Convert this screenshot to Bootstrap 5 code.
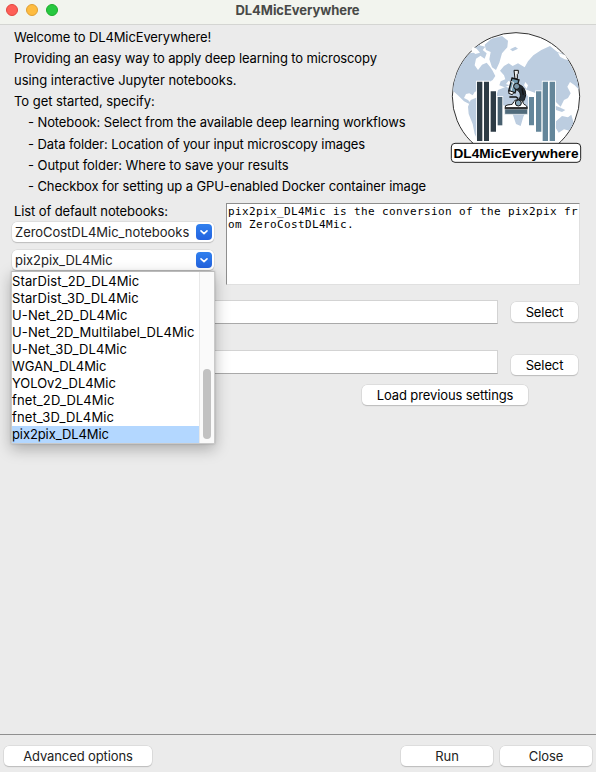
<!DOCTYPE html>
<html lang="en">
<head>
<meta charset="utf-8">
<meta name="viewport" content="width=device-width, initial-scale=1">
<title>DL4MicEverywhere</title>
<link href="https://cdn.jsdelivr.net/npm/bootstrap@5.3.0/dist/css/bootstrap.min.css" rel="stylesheet">
<style>
body{font-family:Inter,"Liberation Sans",sans-serif;font-size:13px;line-height:17px;color:#000;background:#ebebeb;height:772px;overflow:hidden}
.titlebar{height:25px;background:#f2f4ee;border-bottom:1px solid #d4d5d2;padding:0 6px 4px}
.titlebar .title{color:#484947;font-weight:700;letter-spacing:-.06px;line-height:18px;padding-right:53px}
.light{width:12px;height:12px;border-radius:50%;border:1px solid}
.light-r{background:#fe5f57;border-color:#e2483f}
.light-y{background:#febc3f;border-color:#dfa032}
.light-g{background:#27c840;border-color:#1dad2b}
.intro{height:178px;padding:2px 0 0 14px}
.intro p{line-height:21.33px;margin:0;white-space:pre}
.intro .item{padding-left:14px}
.logo{width:156px;height:146px;margin-top:-3px}
.pick{height:97px;padding-left:12px}
.pick-left{width:214px}
.lbl{padding-left:2px;height:19px}
.combo{height:20px;border-radius:5px;background:#fff;box-shadow:0 0 0 .5px #d2d2d2,0 1px 1px #aaa;padding:0 2px 0 3px;color:#222;width:202px}
.chev{width:16px;height:16px;border-radius:4px;background:linear-gradient(#3080ee,#2362df)}
.descr{width:354px;height:82px;background:#fff;border:1px solid #e0e0e0;border-top-color:#8e8e8e;border-left-color:#8e8e8e;font:11px/13px "DejaVu Sans Mono",monospace;letter-spacing:.378px;padding:1px 0 0 1px;white-space:pre}
.field{height:24px;width:486px;background:#fff;border:1px solid #d3d3d3;border-bottom-color:#a9a9a9;margin-right:13px}
.mac-btn{--bs-btn-padding-y:0;--bs-btn-padding-x:0;--bs-btn-font-size:13px;--bs-btn-line-height:19px;--bs-btn-border-radius:5px;--bs-btn-bg:#fff;--bs-btn-color:#000;--bs-btn-border-width:0;height:20px;box-shadow:0 0 0 .5px #d0d0d0,0 1px 1px #aaa}
.w-sel{width:67px;margin-top:2px}
.w-sel.lower{margin-top:5px}
.w-load{width:166px;margin:-15px 0 0 362px}
.w-adv{width:148px}
.w-run{width:92px}
.row-in{height:50px;padding-left:12px}
.footer-bar{height:38px;border-top:1px solid #8f8f8f;padding:11px 4px 0;gap:7px}
.footer-bar .mac-btn{--bs-btn-color:#222}
.popup{left:11px;top:271px;width:204px;height:173px;background:#fff;border:1px solid #c9c9c9;border-top-color:#bbb;box-shadow:0 5px 14px rgba(0,0,0,.28),0 0 2px rgba(0,0,0,.2)}
.popup .list-group{--bs-list-group-bg:#fff;--bs-list-group-color:#000;--bs-list-group-item-padding-x:0;--bs-list-group-item-padding-y:0;--bs-list-group-active-bg:#b3d7ff;--bs-list-group-active-color:#000;width:187px;padding-top:1px}
.popup .list-group-item{height:17px;white-space:nowrap}
.track{width:15px;background:#fafafa;border-left:1px solid #e8e8e8;padding:0 3px 4px}
.thumb{width:8px;height:70px;border-radius:4px;background:#c1c1c1}
.t0{letter-spacing:-.1px}
.t1{letter-spacing:-.04px}
.t2{letter-spacing:.12px}
.tn{letter-spacing:-.12px}
</style>
<script src="https://cdn.jsdelivr.net/npm/bootstrap@5.3.0/dist/js/bootstrap.bundle.min.js"></script>
</head>
<body class="d-flex flex-column position-relative">
<header class="titlebar d-flex align-items-center flex-shrink-0">
  <div class="d-flex gap-2"><span class="light light-r"></span><span class="light light-y"></span><span class="light light-g"></span></div>
  <div class="title flex-grow-1 text-center">DL4MicEverywhere</div>
</header>
<main class="flex-grow-1">
  <section class="intro d-flex justify-content-between">
    <div class="t0">
      <p class="tn">Welcome to DL4MicEverywhere!</p>
      <p class="tn">Providing an easy way to apply deep learning to microscopy</p>
      <p class="t1">using interactive Jupyter notebooks.</p>
      <p class="t1">To get started, specify:</p>
      <p class="item">- Notebook: Select from the available deep learning workflows</p>
      <p class="item">- Data folder: Location of your input microscopy images</p>
      <p class="item t1">- Output folder: Where to save your results</p>
      <p class="item">- Checkbox for setting up a GPU-enabled Docker container image</p>
    </div>
    <svg class="logo flex-shrink-0" viewBox="0 0 468 438">
      <defs><clipPath id="globe"><circle cx="228" cy="217" r="190"/></clipPath></defs>
      <circle cx="228" cy="217" r="191" fill="#fff" stroke="#333" stroke-width="3"/>
      <g clip-path="url(#globe)" fill="#bccde0">
        <path d="M30 160L62 112L90 88L112 84L126 92L108 104L104 124L114 138L126 122L140 116L150 128L158 140L166 156L158 168L148 174L136 184L122 188L112 200L104 204L98 214L88 208L78 210L72 222L84 228L92 236L88 240L72 232L52 212L34 196Z"/>
        <path d="M96 76L112 62L136 68L128 78L140 88L134 104L122 96L112 84Z"/>
        <path d="M134 62L154 44L186 36L204 50L202 70L186 88L178 116L168 138L156 130L148 106L152 84L138 78Z"/>
        <path d="M92 228L112 220L134 232L152 252L164 262L154 290L136 318L126 340L114 350L104 330L98 300L86 270L84 248Z"/>
        <path d="M180 140L192 126L206 118L218 126L234 118L254 130L264 112L280 94L304 78L330 66L352 84L378 92L390 120L410 160L420 200L404 184L390 174L382 188L392 208L384 222L372 228L362 248L350 236L338 226L330 214L318 214L304 218L294 210L284 206L272 202L256 196L240 192L224 190L208 184L194 190L178 184L182 172L196 166L192 154Z"/>
        <path d="M174 198L198 188L220 198L252 200L270 226L264 252L250 278L242 306L228 300L218 270L206 250L180 240L168 220Z"/>
        <path d="M294 210L314 212L308 232L298 224Z"/>
        <path d="M342 244L358 250L376 258L366 264L348 258Z"/>
        <path d="M348 292L366 276L384 280L394 272L402 300L388 320L372 316L356 326L346 310Z"/>
        <path d="M210 76L226 68L234 74L218 82Z"/>
      </g>
      <g fill="#fff">
        <path d="M98 68L110 74L120 86L106 90L94 80Z"/>
        <path d="M206 170L218 180L236 178L244 188L226 192L208 184L198 180Z"/>
        <path d="M256 174L264 184L260 194L252 184Z"/>
        <path d="M354 86L376 94L384 108L374 106L360 98Z"/>
      </g>
      <g stroke="#fff" stroke-width="5" paint-order="stroke">
        <g fill="#2d3b45"><path d="M111 173H127V351H111ZM132 173H147V351H132ZM152 202H168V323H152Z"/><path fill="#48606f" d="M173 219H187V304H173Z"/></g>
        <path fill="#64869a" d="M267 219H282V304H267ZM288 202H304V323H288ZM308 173H324V351H308ZM329 173H345V351H329Z"/>
      </g>
      <path d="M222 139H235V148L232 151L232 164L225 165Z" fill="#eee" stroke="#111" stroke-width="3"/>
      <path d="M216 162L237 168L225 207L206 201Z" fill="#719bb2" stroke="#151515" stroke-width="4"/>
      <path d="M213 173L221 175L213 201" fill="none" stroke="#eee" stroke-width="3"/>
      <path d="M208 200L222 205L217 212L206 208Z" fill="#fff" stroke="#111" stroke-width="3"/>
      <path d="M231 180C253 184 264 206 252 229L242 240L234 228C247 218 241 199 226 196Z" fill="#252f37" stroke="#111" stroke-width="3"/>
      <circle cx="230" cy="187" r="9" fill="#7794a6" stroke="#111" stroke-width="3"/>
      <path d="M208 219H228L235 224M246 193L250 213" fill="none" stroke="#111" stroke-width="4"/>
      <path d="M197 245C206 240 217 244 219 238C222 223 247 223 250 238C252 244 260 241 262 251H195Z" fill="#fff" stroke="#151515" stroke-width="3"/>
      <circle cx="235" cy="237" r="9" fill="#87a7ba" stroke="#111" stroke-width="3"/>
      <path d="M194 255H263V271H194Z" fill="#506b7c" stroke="#fff" stroke-width="2"/>
      <path d="M194 254H263" stroke="#111" stroke-width="3"/>
      <rect x="34" y="358" width="388" height="57" rx="11" fill="#fff" stroke="#222" stroke-width="3"/>
      <text x="228" y="401" text-anchor="middle" textLength="375" lengthAdjust="spacingAndGlyphs" font-family="Liberation Sans,Arial,sans-serif" font-size="41" font-weight="700">DL4MicEverywhere</text>
    </svg>
  </section>
  <section class="pick d-flex">
    <div class="pick-left flex-shrink-0">
      <div class="lbl t0">List of default notebooks:</div>
      <div class="combo d-flex align-items-center justify-content-between t1"><span>ZeroCostDL4Mic_notebooks</span><span class="chev d-flex"><svg viewBox="0 0 16 16"><path d="M5 6.8L8 9.7L11 6.8" fill="none" stroke="#fff" stroke-width="1.6" stroke-linecap="round" stroke-linejoin="round"/></svg></span></div>
      <div class="combo mt-2 d-flex align-items-center justify-content-between t1"><span>pix2pix_DL4Mic</span><span class="chev d-flex"><svg viewBox="0 0 16 16"><path d="M5 6.8L8 9.7L11 6.8" fill="none" stroke="#fff" stroke-width="1.6" stroke-linecap="round" stroke-linejoin="round"/></svg></span></div>
    </div>
    <div class="descr">pix2pix_DL4Mic is the conversion of the pix2pix fr
om ZeroCostDL4Mic.</div>
  </section>
  <section class="row-in d-flex align-items-start"><div class="field"></div><button class="btn mac-btn w-sel t0">Select</button></section>
  <section class="row-in d-flex align-items-start"><div class="field"></div><button class="btn mac-btn w-sel t0 lower">Select</button></section>
  <button class="btn mac-btn w-load t0 d-block">Load previous settings</button>
</main>
<footer class="footer-bar d-flex flex-shrink-0">
  <button class="btn mac-btn w-adv t0 me-auto">Advanced options</button>
  <button class="btn mac-btn w-run t0">Run</button>
  <button class="btn mac-btn w-run t0">Close</button>
</footer>
<div class="popup position-absolute d-flex">
  <ul class="list-group list-group-flush t0">
    <li class="list-group-item border-0 t2">StarDist_2D_DL4Mic</li>
    <li class="list-group-item border-0 t2">StarDist_3D_DL4Mic</li>
    <li class="list-group-item border-0 t2">U-Net_2D_DL4Mic</li>
    <li class="list-group-item border-0 t2">U-Net_2D_Multilabel_DL4Mic</li>
    <li class="list-group-item border-0 t2">U-Net_3D_DL4Mic</li>
    <li class="list-group-item border-0 t1">WGAN_DL4Mic</li>
    <li class="list-group-item border-0 t1">YOLOv2_DL4Mic</li>
    <li class="list-group-item border-0 t2">fnet_2D_DL4Mic</li>
    <li class="list-group-item border-0 t2">fnet_3D_DL4Mic</li>
    <li class="list-group-item border-0 active m-0">pix2pix_DL4Mic</li>
  </ul>
  <div class="track d-flex align-items-end"><div class="thumb"></div></div>
</div>
</body>
</html>
